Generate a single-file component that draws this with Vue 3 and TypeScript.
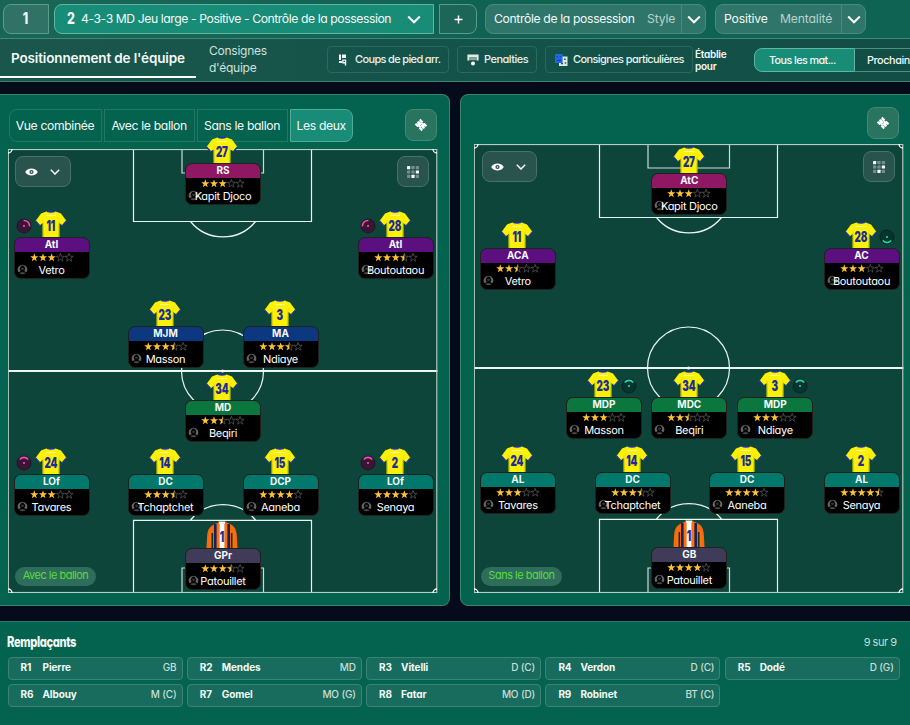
<script setup lang="ts">
type Kind = 'attack' | 'wing' | 'mid' | 'hold' | 'back' | 'keeper'
interface Duty { side: 'left' | 'right'; tone: 'pink' | 'teal'; angle: number }
interface Player {
  x: number
  y: number
  num: number
  role: string
  name: string
  stars: number
  kind: Kind
  duty?: Duty
}
interface Pitch {
  id: string
  label: string
  height: number
  mid: number
  boxTop: number
  goalTop: number
  boxBottom: number
  goalBottom: number
  players: Player[]
}

const pitches: Pitch[] = [
  {
    id: 'with', label: 'Avec le ballon', height: 444, mid: 222, boxTop: 72, goalTop: 24, boxBottom: 371, goalBottom: 419,
    players: [
      { x: 215, y: 14, num: 27, role: 'RS', name: 'Kapit Djoco', stars: 3, kind: 'attack' },
      { x: 43.5, y: 88, num: 11, role: 'AtI', name: 'Vetro', stars: 3, kind: 'wing', duty: { side: 'left', tone: 'pink', angle: 45 } },
      { x: 387.5, y: 88, num: 28, role: 'AtI', name: 'Boutoutaou', stars: 3.5, kind: 'wing', duty: { side: 'left', tone: 'pink', angle: -45 } },
      { x: 157.5, y: 177, num: 23, role: 'MJM', name: 'Masson', stars: 3.5, kind: 'mid' },
      { x: 272.5, y: 177, num: 3, role: 'MA', name: 'Ndiaye', stars: 3.5, kind: 'mid' },
      { x: 215, y: 251, num: 34, role: 'MD', name: 'Beqiri', stars: 2.5, kind: 'hold' },
      { x: 43.5, y: 325, num: 24, role: 'LOf', name: 'Tavares', stars: 3, kind: 'back', duty: { side: 'left', tone: 'pink', angle: 0 } },
      { x: 157.5, y: 325, num: 14, role: 'DC', name: 'Tchaptchet', stars: 3.5, kind: 'back' },
      { x: 272.5, y: 325, num: 15, role: 'DCP', name: 'Aaneba', stars: 4, kind: 'back' },
      { x: 387.5, y: 325, num: 2, role: 'LOf', name: 'Senaya', stars: 4, kind: 'back', duty: { side: 'left', tone: 'pink', angle: 0 } },
      { x: 215, y: 399, num: 1, role: 'GPr', name: 'Patouillet', stars: 3.5, kind: 'keeper' },
    ],
  },
  {
    id: 'without', label: 'Sans le ballon', height: 449, mid: 224, boxTop: 73, goalTop: 24, boxBottom: 375, goalBottom: 424,
    players: [
      { x: 215.3, y: 29, num: 27, role: 'AtC', name: 'Kapit Djoco', stars: 3, kind: 'attack' },
      { x: 43.8, y: 104, num: 11, role: 'ACA', name: 'Vetro', stars: 2.5, kind: 'wing' },
      { x: 387.5, y: 104, num: 28, role: 'AC', name: 'Boutoutaou', stars: 3, kind: 'wing', duty: { side: 'right', tone: 'teal', angle: 180 } },
      { x: 130, y: 253, num: 23, role: 'MDP', name: 'Masson', stars: 3, kind: 'hold', duty: { side: 'right', tone: 'teal', angle: 0 } },
      { x: 215.3, y: 253, num: 34, role: 'MDC', name: 'Beqiri', stars: 2.5, kind: 'hold' },
      { x: 301.3, y: 253, num: 3, role: 'MDP', name: 'Ndiaye', stars: 3, kind: 'hold', duty: { side: 'right', tone: 'teal', angle: 0 } },
      { x: 43.8, y: 328, num: 24, role: 'AL', name: 'Tavares', stars: 3, kind: 'back' },
      { x: 158.5, y: 328, num: 14, role: 'DC', name: 'Tchaptchet', stars: 3.5, kind: 'back' },
      { x: 273, y: 328, num: 15, role: 'DC', name: 'Aaneba', stars: 4, kind: 'back' },
      { x: 387.5, y: 328, num: 2, role: 'AL', name: 'Senaya', stars: 4.5, kind: 'back' },
      { x: 215.3, y: 403, num: 1, role: 'GB', name: 'Patouillet', stars: 4, kind: 'keeper' },
    ],
  },
]

const viewTabs = [
  { label: 'Vue combinée', cls: 't1' },
  { label: 'Avec le ballon', cls: 't2' },
  { label: 'Sans le ballon', cls: 't3' },
  { label: 'Les deux', cls: 't4' },
]

const bench = [
  ['R1', 'Pierre', 'GB'], ['R2', 'Mendes', 'MD'], ['R3', 'Vitelli', 'D (C)'], ['R4', 'Verdon', 'D (C)'], ['R5', 'Dodé', 'D (G)'],
  ['R6', 'Albouy', 'M (C)'], ['R7', 'Gomel', 'MO (G)'], ['R8', 'Fatar', 'MO (D)'], ['R9', 'Robinet', 'BT (C)'],
]

const dots = [1, 0.35, 0.35, 0.35, 0.35, 1, 0.35, 1, 0.35]
const star = 'M4.3 0.3 5.3 3.2 8.4 3.3 5.9 5.2 6.8 8.2 4.3 6.4 1.8 8.2 2.7 5.2 0.2 3.3 3.3 3.2Z'
const halfStar = 'M4.3 0.3 4.3 6.4 1.8 8.2 2.7 5.2 0.2 3.3 3.3 3.2Z'
</script>

<template>
  <div class="screen">
    <header class="tactics">
      <div class="slot one"><b>1</b></div>
      <div class="slot two">
        <b>2</b><span class="tname">4-3-3 MD Jeu large - Positive - Contrôle de la possession</span>
        <svg class="chev" viewBox="0 0 14 9"><path d="M1.2 1.5 7 7.3 12.8 1.5" /></svg>
      </div>
      <div class="slot plus">
        <svg viewBox="0 0 9 9"><path d="M4.5 0.5V8.5M0.5 4.5H8.5" /></svg>
      </div>
      <div class="select style">
        <span class="val">Contrôle de la possession</span><span class="kind">Style</span>
        <i><svg class="chev" viewBox="0 0 14 9"><path d="M1.2 1.5 7 7.3 12.8 1.5" /></svg></i>
      </div>
      <div class="select ment">
        <span class="val">Positive</span><span class="kind">Mentalité</span>
        <i><svg class="chev" viewBox="0 0 14 9"><path d="M1.2 1.5 7 7.3 12.8 1.5" /></svg></i>
      </div>
    </header>

    <nav class="sub">
      <div class="tab active">Positionnement de l'équipe</div>
      <div class="tab lines">Consignes<br />d'équipe</div>
      <button class="act a1">
        <svg viewBox="0 0 8 12" width="8" height="12">
          <path d="M0 0.5H2V6H0ZM3 0.5H7V4H3ZM0 7H3V9H0ZM3.2 5.5H7.2V11.5H5.8V9.5H3.2Z" fill="#f2f8f6" />
          <path d="M4.5 6.8H6V8H4.5Z" fill="#17534a" />
        </svg>
        <span>Coups de pied arr.</span>
      </button>
      <button class="act a2">
        <svg viewBox="0 0 12 12" width="12" height="12">
          <path d="M0.4 0.6H11.6V6.5H9.5V3.2H2.5V6.5H0.4Z" fill="#dfe9e6" />
          <path d="M2.5 3.2H9.5V6.2H2.5Z" fill="#85a69e" />
          <circle cx="6" cy="9.4" r="2" fill="#fff" />
        </svg>
        <span>Penalties</span>
      </button>
      <button class="act a3">
        <svg viewBox="0 0 13 12" width="13" height="12">
          <path d="M7 2.5H12.5V12H4V8H7Z" fill="#dce8e5" />
          <path d="M9 4.4H10.6V6H9ZM6 9H8V10.3H6ZM9.8 8.2H11.2V9.8H9.8Z" fill="#29594f" />
          <path d="M0 0H7.6V9H0Z" fill="#1f68e8" />
          <path d="M1.7 2.8H3M4.8 2.8H6M1.7 5.7 2.6 6.6H5L6 5.7" stroke="#0b3a9e" fill="none" />
        </svg>
        <span>Consignes particulières</span>
      </button>
      <div class="for">Établie<br />pour</div>
      <div class="match on">Tous les mat...</div>
      <div class="match next">Prochain</div>
    </nav>

    <main class="panels">
      <section v-for="p in pitches" :key="p.id" :class="['panel', p.id]">
        <div class="toolbar">
          <template v-if="p.id === 'with'">
            <div v-for="t in viewTabs" :key="t.label" :class="['view', t.cls]">{{ t.label }}</div>
          </template>
          <div class="tool">
            <svg viewBox="0 0 14 14" width="14" height="14">
              <g transform="rotate(45 7 7)">
                <path d="M2.2 3H6.2V4.2H7.8V3H11.8V5H10.6V6H11.8V8H10.6V9H11.8V11H7.8V9.8H6.2V11H2.2V9H3.4V8H2.2V6H3.4V5H2.2Z" fill="#fff" />
                <path d="M4.6 5.5H6M8.2 8.5H9.6M7 6V8" stroke="#28745f" stroke-width="0.7" />
              </g>
            </svg>
          </div>
        </div>

        <div class="pitch">
          <svg class="field" width="430" :height="p.height" :viewBox="`0 0 430 ${p.height}`">
            <rect width="429.5" :height="p.height" fill="#0d453b" />
            <g fill="none" stroke="#eef6f3" stroke-width="1.2">
              <path :d="`M125.5 0.5V${p.boxTop + 0.5}H303.5V0.5M182.5 ${p.boxTop + 0.5}A42 42 0 0 0 247.5 ${p.boxTop + 0.5}`" />
              <path :d="`M174 0.5V${p.goalTop}H255.5V0.5`" stroke-opacity="0.85" />
              <path :d="`M125.5 ${p.height}V${p.boxBottom + 0.3}H303.5V${p.height}M182.5 ${p.boxBottom}A42 42 0 0 1 247.5 ${p.boxBottom}`" />
              <path :d="`M174 ${p.height}V${p.goalBottom}H255.5V${p.height}`" stroke-opacity="0.85" />
              <circle cx="214.5" :cy="p.mid" r="41" />
              <path :d="`M0 ${p.mid}H429.5`" stroke-width="1.8" />
            </g>
            <circle cx="214.5" :cy="p.mid" r="1.6" fill="#fff" />
            <rect x="0.3" y="0.5" width="428.5" :height="p.height - 1" fill="none" stroke="#b4cec4" stroke-width="1.2" />
            <path :d="`M0 4A4 4 0 0 0 4 0M425 0A4 4 0 0 0 429 4M0 ${p.height - 4}A4 4 0 0 1 4 ${p.height}M425 ${p.height}A4 4 0 0 1 429 ${p.height - 4}`" fill="none" stroke="#fff" stroke-width="1.3" />
          </svg>

          <div class="eyebox">
            <svg viewBox="0 0 13 8" width="13" height="8">
              <path d="M0.2 4C2 1.3 4 0.5 6.5 0.5S11 1.3 12.8 4C11 6.7 9 7.5 6.5 7.5S2 6.7 0.2 4Z" fill="#fff" />
              <circle cx="6.5" cy="4" r="2.1" fill="#28544d" /><circle cx="6.5" cy="4" r="0.8" fill="#fff" />
            </svg>
            <svg viewBox="0 0 10 6" width="10" height="6"><path d="M0.8 0.8 5 5 9.2 0.8" fill="none" stroke="#fff" stroke-width="1.5" /></svg>
          </div>
          <div class="gridbox">
            <svg viewBox="0 0 12 12" width="12" height="12">
              <rect v-for="(o, i) in dots" :key="i" :x="(i % 3) * 4.4" :y="Math.floor(i / 3) * 4.4" width="3.2" height="3.2" rx="0.4" fill="#fff" :opacity="o" />
            </svg>
          </div>

          <div v-for="pl in p.players" :key="pl.num" class="player" :style="{ left: pl.x - 38 + 'px', top: pl.y + 'px' }">
            <svg class="shirt" viewBox="0 0 32 28" width="32" height="28">
              <template v-if="pl.kind === 'keeper'">
                <path d="M10 2.5 13 1.2H20L23 2.5C28 4.5 30 7 30.8 14L31.6 28H0.4L1.2 14C2 7 5 4.5 10 2.5Z" fill="#f96a08" />
                <path d="M6.3 12V28M25.7 12V28" stroke="#12321f" stroke-width="1.6" />
                <path d="M9.3 3V28M22.7 3V28" stroke="#18205e" stroke-width="2.6" />
                <path d="M4 11V28M28 11V28M12 2.5V28M20 2.5V28" stroke="#ff7c1c" stroke-width="0.8" />
                <path d="M13.6 1H18.4V28H13.6Z" fill="#fff" />
                <path d="M12.5 0.5H19.5L18.5 3H13.5Z" fill="#f5f5f5" />
              </template>
              <template v-else>
                <path d="M10 2 13 1H19L22 2 26 3.4 31.5 11 27.5 15.5 24.3 13V28H7.7V13L4.5 15.5 0.5 11 6 3.4Z" fill="#fbf006" />
                <path d="M24.3 9V28H22.8L23.4 13ZM7.7 9V28H9.2L8.6 13Z" fill="#d9d000" />
                <path d="M0.5 11 4.5 15.5M31.5 11 27.5 15.5" stroke="#1c2fae" stroke-width="1.4" />
                <path d="M12 1.3Q16 2.4 20 1.3" stroke="#1c2fae" stroke-width="1.6" fill="none" />
                <path d="M11 5.5H21" stroke="#fffbb0" stroke-width="0.8" />
              </template>
              <text x="0" y="20.8" transform="translate(15.8 0) scale(.68 1)" text-anchor="middle">{{ pl.num }}</text>
            </svg>
            <svg v-if="pl.duty" :class="['duty', pl.duty.side, pl.duty.tone]" viewBox="-8 -8 16 16" width="16" height="16">
              <circle r="7" />
              <path d="M-4.2 -3.6A5.4 5.4 0 0 1 4.2 -3.6" :transform="`rotate(${pl.duty.angle})`" />
              <circle class="pip" r="1" />
            </svg>
            <div class="card">
              <div :class="['role', pl.kind]">{{ pl.role }}</div>
              <svg class="stars" viewBox="0 0 44 9" width="44" height="9">
                <g v-for="n in 5" :key="n" :transform="`translate(${(n - 1) * 8.7} 0)`">
                  <path v-if="n <= pl.stars" :d="star" fill="#ffc234" />
                  <template v-else>
                    <path :d="star" fill="none" stroke="#6c6c6c" stroke-width="0.6" />
                    <path v-if="n - 0.5 === pl.stars" :d="halfStar" fill="#ffc234" />
                  </template>
                </g>
              </svg>
              <svg class="head" viewBox="0 0 11 11" width="11" height="11">
                <path d="M5.5 0.7A4.8 4.8 0 0 1 9.4 8.3L7.2 6.9A2.6 2.9 0 1 0 3.8 6.9L1.6 8.3A4.8 4.8 0 0 1 5.5 0.7Z" fill="#666" />
                <path d="M2.4 9.2C3.4 8 7.6 8 8.6 9.2 7 10.5 4 10.5 2.4 9.2Z" fill="#4a4a4a" />
                <circle cx="5.5" cy="4.8" r="1.4" fill="#333" />
              </svg>
              <div class="name">{{ pl.name }}</div>
            </div>
          </div>

          <div class="tag">{{ p.label }}</div>
        </div>
      </section>
    </main>

    <footer class="subs">
      <div class="shead"><h2>Remplaçants</h2><span>9 sur 9</span></div>
      <div class="bench">
        <div v-for="b in bench" :key="b[0]" class="sub-card">
          <b>{{ b[0] }}</b><strong>{{ b[1] }}</strong><span>{{ b[2] }}</span>
        </div>
      </div>
    </footer>
  </div>
</template>

<style>
body { background: #060b1c; overflow: hidden; }
</style>

<style scoped>
* { box-sizing: border-box; }
.screen {
  width: 910px; height: 725px; overflow: hidden; background: #060b1c; color: #f3faf7;
  font-family: Inter, "Liberation Sans", sans-serif; font-feature-settings: "cv11";
  display: flex; flex-direction: column; white-space: nowrap;
}
.tactics {
  flex: none; width: 920px; height: 39px; padding: 4px 0 0 3px; display: flex; align-items: flex-start;
  background: linear-gradient(90deg, #1a6656, #106353 50%, #0e6352); border-bottom: 1px solid #448676;
}
.slot { flex: none; height: 30px; border: 1px solid #5c9b8c; display: flex; align-items: center; }
.slot b { font-size: 15.5px; font-weight: 800; display: inline-block; transform: translateY(-1px) scaleX(.8); }
.one { width: 46px; padding-right: 2px; justify-content: center; background: #307265; border-radius: 8px 0 0 8px; }
.two { width: 380px; margin-left: 5px; padding-left: 11px; background: #188c77; border-color: #62b5a4; border-radius: 8px 0 0 8px; }
.two b { width: 9px; }
.tname { flex: none; font-size: 12.2px; margin-left: 6px; width: 326px; letter-spacing: -.42px; margin-top: -1px; }
.chev { width: 14px; height: 9px; flex: none; }
.chev path { fill: none; stroke: #fff; stroke-width: 2; }
.plus { width: 38px; margin-left: 5px; justify-content: center; background: #1b6657; border-radius: 0 8px 8px 0; }
.plus svg { width: 9px; height: 9px; }
.plus path { stroke: #fff; stroke-width: 1.5; }
.select { flex: none; height: 30px; background: #30756a; border: 1px solid #4b897d; border-radius: 8px; display: flex; align-items: center; font-size: 12.2px; letter-spacing: -.36px; padding-left: 8px; }
.select span { margin-top: -1px; }
.select .kind { color: #b9d4cd; letter-spacing: -.16px; }
.select i { margin-left: auto; height: 28px; border-left: 1px solid #4b897d; width: 24px; display: flex; align-items: center; justify-content: center; }
.style { width: 221px; margin-left: 8px; }
.style .kind { margin-left: 12px; }
.style .val { width: 141px; }
.ment { width: 151px; margin-left: 9px; }
.ment .val { width: 44px; letter-spacing: -.18px; }
.ment .kind { margin-left: 12px; }

.sub {
  flex: none; width: 940px; height: 43px; display: flex; align-items: flex-start;
  background: linear-gradient(90deg, #1b564c, #14534a 50%, #124d45); border-bottom: 1px solid #3f8270;
}
.tab.active { width: 196px; height: 39px; padding: 11px 0 0 11px; font-size: 13.5px; line-height: 17px; font-weight: 600; letter-spacing: -.14px; border-bottom: 2px solid #fff; }
.lines { font-size: 12px; line-height: 17px; padding-top: 3px; margin-left: 13px; width: 118px; color: #cfe2dc; letter-spacing: -.25px; }
.act {
  flex: none; font: 500 11px Inter, sans-serif; font-feature-settings: "cv11"; color: #e6f2ee; background: transparent;
  border: 1px solid #2c685c; border-radius: 4px; height: 27px; margin: 7px 8px 0 0; padding: 0 0 0 11px; display: flex; align-items: center;
}
.act span { margin-top: -1px; }
.a1 { width: 122px; }
.a1 span { margin-left: 8px; letter-spacing: -.65px; }
.a2 { width: 80px; padding-left: 9px; }
.a2 span { margin-left: 5px; letter-spacing: -.5px; }
.a3 { width: 148px; margin-right: 3px; padding-left: 9px; }
.a3 span { margin-left: 5px; letter-spacing: -.6px; }
.for { flex: none; width: 59px; font-size: 10px; line-height: 12px; font-weight: 600; padding-top: 9px; margin-left: -1px; letter-spacing: -.25px; }
.match { flex: none; height: 24px; margin-top: 9px; font-size: 10.8px; font-weight: 500; letter-spacing: -.58px; display: flex; align-items: center; border: 1px solid #4d9080; }
.on { width: 101px; background: #188c77; border-color: #5fb4a2; border-radius: 8px 0 0 8px; padding-left: 14px; }
.next { width: 75px; padding-left: 12px; border-left: 0; letter-spacing: -.4px; }

.panels { flex: none; height: 512px; margin-top: 12px; display: flex; }
.panel { flex: none; height: 512px; background: #03634f; border: 1px solid #3a8569; }
.panel.with { width: 450px; border-left: 0; border-radius: 0 8px 8px 0; padding-left: 8px; }
.panel.without { width: 470px; margin-left: 10px; border-radius: 8px; padding-left: 13px; }
.toolbar { display: flex; align-items: flex-start; height: 54px; padding-top: 14px; width: 429px; }
.without .toolbar { height: 49px; padding-top: 12px; width: 425px; }
.view { flex: none; height: 33px; border: 1px solid #267762; font-size: 12.2px; letter-spacing: -.36px; display: flex; align-items: center; justify-content: center; margin-right: 2.4px; padding: 0 1px 1px 0; }
.t1 { width: 93px; margin-left: 1px; border-radius: 8px 0 0 8px; }
.t2 { width: 90.5px; }
.t3 { width: 90.5px; }
.t4 { width: 63px; background: #188c77; border-color: #50ab97; border-radius: 0 8px 8px 0; }
.tool { width: 32px; height: 32px; border: 1px solid #458875; border-radius: 8px; background: #28745f; margin-left: auto; display: flex; align-items: center; justify-content: center; }
.pitch { position: relative; width: 430px; }
.field { display: block; }
.eyebox, .gridbox { position: absolute; top: 7px; height: 31px; border: 1px solid #487169; border-radius: 8px; background: #28544d; display: flex; align-items: center; justify-content: center; }
.eyebox { left: 7px; width: 56px; gap: 12px; padding-right: 2px; }
.without .eyebox { left: 8px; width: 55px; }
.gridbox { left: 389px; width: 32px; }
.tag { position: absolute; left: 7px; bottom: 7.5px; width: 81px; height: 19px; border-radius: 10px; background: #2e6c5b; color: #59dc3b; font-size: 11px; letter-spacing: -.5px; display: flex; align-items: center; justify-content: center; padding-bottom: 2px; }

.player { position: absolute; width: 76px; height: 42px; }
.shirt { position: absolute; left: 21.3px; top: -27px; }
.shirt text { font: 900 14.5px Inter, sans-serif; fill: #1d2c9c; letter-spacing: -.3px; }
.duty { position: absolute; top: -19.5px; }
.duty.left { left: 2px; }
.duty.right { left: 55.2px; }
.duty circle { fill: #3a1634; stroke: #21152a; }
.duty path { fill: none; stroke: #f04fae; stroke-width: 1.6; }
.duty .pip { fill: #ff59b5; stroke: none; }
.duty.teal circle { fill: #06352f; stroke: #042520; }
.duty.teal path { stroke: #1fd6b4; }
.duty.teal .pip { fill: #28e0c0; stroke: none; }
.card { position: relative; width: 76px; height: 41.5px; background: #000; border-radius: 7px; border: 1px solid #20221f; overflow: hidden; }
.role { width: 76px; height: 15px; margin: -1px 0 0 -1px; border: 1px solid; border-bottom: 0; border-radius: 7px 7px 0 0; font-size: 10px; line-height: 13px; font-weight: 700; text-align: center; }
.attack { background: #8f1763; border-color: #a53b7e; }
.wing { background: #5c107f; border-color: #7a3299; }
.mid { background: #0b387f; border-color: #315aa0; }
.hold { background: #0c763f; border-color: #378f60; }
.back { background: #00786c; border-color: #309389; }
.keeper { background: #3f3b59; border-color: #625e7c; }
.stars { display: block; margin: 1px auto 0; }
.head { position: absolute; left: 2px; top: 26px; }
.name { position: relative; text-align: center; color: #fff; font-size: 11px; line-height: 15px; letter-spacing: -.3px; text-rendering: geometricPrecision; margin: 1px -5px 0; }

.subs { flex: none; width: 910px; height: 104px; margin-top: 15px; background: #03634f; border-top: 1px solid #2b7967; padding: 10px 8px 0 7.5px; }
.shead { display: flex; justify-content: space-between; height: 25px; width: 889px; }
.shead h2 { margin: 0 0 0 -1px; font-size: 14.5px; line-height: 20px; font-weight: 800; letter-spacing: -.5px; transform: scaleX(.77); transform-origin: 0 50%; }
.shead span { font-size: 11px; line-height: 21px; color: #c4dcd4; letter-spacing: -.5px; }
.bench { display: grid; grid-template-columns: repeat(5, 175px); gap: 4.5px 4.3px; grid-auto-rows: 22.5px; }
.sub-card { display: flex; align-items: center; background: #176c5d; border: 1px solid #3c8374; border-radius: 4px; padding: 0 5px 2px 12px; font-size: 10px; letter-spacing: -.1px; }
.sub-card b { width: 22px; font-weight: 700; }
.sub-card strong { font-weight: 700; }
.sub-card span { margin-left: auto; color: #c9dfd8; font-weight: 500; letter-spacing: -.15px; }
</style>
